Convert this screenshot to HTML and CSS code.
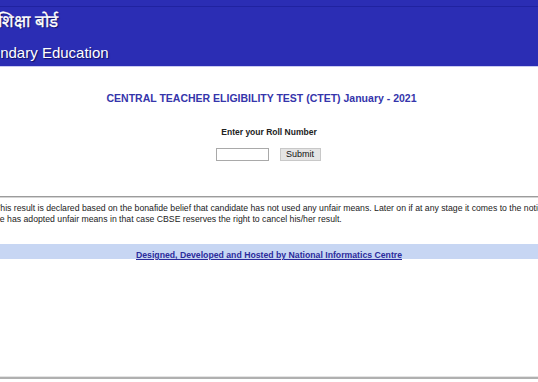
FILE: index.html
```html
<!DOCTYPE html>
<html lang="en">
<head>
  <meta charset="UTF-8">
  <title>CTET Result January - 2021</title>
  <link rel="stylesheet" href="styles.css">
</head>
<body>
  <div class="header">
    <div class="header-strip"></div>
    <div class="board-hi">शिक्षा बोर्ड</div>
    <div class="board-en">Secondary Education</div>
  </div>

  <div class="content">
    <h1 class="exam-title">CENTRAL TEACHER ELIGIBILITY TEST (CTET) January - 2021</h1>

    <form class="roll-form" onsubmit="return false;">
      <label class="roll-label" for="rollNo">Enter your Roll Number</label>
      <div class="roll-row">
        <input type="text" id="rollNo" class="roll-input">
        <button type="submit" class="btn-submit">Submit</button>
      </div>
    </form>
  </div>

  <div class="rule"></div>

  <p class="disclaimer">
    This result is declared based on the bonafide belief that candidate has not used any unfair means. Later on if at any stage it comes to the notice of the Board that<br>he has adopted unfair means in that case CBSE reserves the right to cancel his/her result.
  </p>

  <div class="footer">
    <a href="#" class="footer-link">Designed, Developed and Hosted by National Informatics Centre</a>
  </div>

  <div class="bottom-rule"></div>
</body>
</html>
```

FILE: styles.css
```css
html, body {
  margin: 0;
  padding: 0;
  background: #fff;
  overflow: hidden;
}
body {
  font-family: "Liberation Sans", Arial, sans-serif;
  width: 538px;
  height: 382px;
  display: flex;
  flex-direction: column;
}
.header {
  height: 66px;
  background-color: #2b2db4;
  border-bottom: 1px solid #c9cbf2;
  color: #fff;
  text-shadow: 1px 1px 1px #101060;
}
.header-strip {
  height: 6px;
  border-bottom: 1px solid #2022a0;
}
.board-hi {
  margin: 3px 0 0 -2px;
  font-size: 17px;
  line-height: 24px;
  white-space: nowrap;
  -webkit-text-stroke: 0.3px #fff;
}
.board-en {
  margin: 11px 0 0 -34px;
  font-size: 15px;
  line-height: 16px;
  white-space: nowrap;
}
.content {
  text-align: center;
}
.exam-title {
  margin: 24px 0 0;
  padding-right: 15px;
  font-size: 10.5px;
  line-height: 14px;
  color: #3535ab;
}
.roll-form {
  margin-top: 21px;
}
.roll-label {
  display: block;
  font-size: 8.5px;
  font-weight: bold;
  line-height: 12px;
  color: #222;
}
.roll-row {
  display: flex;
  justify-content: center;
  gap: 11px;
  margin-top: 10px;
  padding-right: 2px;
}
.roll-input {
  box-sizing: border-box;
  width: 53px;
  height: 13px;
  margin: 0;
  padding: 0 2px;
  border: 1px solid #a9a9a9;
  background: #fff;
}
.btn-submit {
  box-sizing: border-box;
  width: 41px;
  height: 13px;
  margin: 0;
  padding: 0;
  border: 1px solid #c8c8c8;
  background: #e4e4e4;
  font-family: "Liberation Sans", Arial, sans-serif;
  font-size: 9px;
  line-height: 11px;
  color: #111;
}
.rule {
  margin-top: 35px;
  height: 1px;
  background: #9c9c9c;
  border-bottom: 1px solid #d4d4d4;
}
.disclaimer {
  margin: 5px 0 0 -5px;
  font-size: 8.7px;
  line-height: 11px;
  color: #222;
  white-space: nowrap;
}
.footer {
  margin-top: 19px;
  height: 15px;
  background-color: #c7d6f3;
  text-align: center;
}
.footer-link {
  font-size: 8.7px;
  font-weight: bold;
  line-height: 15px;
  color: #2b2b9c;
}
.bottom-rule {
  margin-top: auto;
  margin-bottom: 3px;
  height: 2px;
  background: #b0b0b0;
  border-top: 1px solid #e4e4e4;
}
```
